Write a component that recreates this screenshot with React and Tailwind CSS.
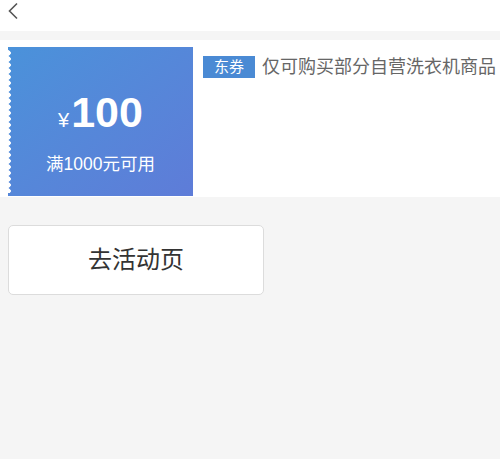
import React from 'react';

export default function App() {
  return (
    <div className="min-h-[459px] w-[500px] bg-[#f5f5f5] font-['Liberation_Sans','Noto_Sans_CJK_SC',sans-serif]">
      {/* HEADER */}
      <div className="h-[31px] bg-white flex items-start px-[7px] pt-[2px]">
        <svg width="12" height="18" viewBox="0 0 12 18">
          <path d="M10 1.5 L2.5 9 L10 16.5" fill="none" stroke="#555" strokeWidth="1.6" />
        </svg>
      </div>

      {/* COUPON */}
      <div className="mt-[9px] bg-white pt-[7px] pb-px pl-[8px] flex">
        <div className="relative shrink-0 w-[185px] h-[149px] bg-gradient-to-br from-[#4a92da] to-[#5e7cd8] flex flex-col items-center text-white">
          <div className="absolute left-[-3px] top-[3px] bottom-[3px] w-[6px] bg-[radial-gradient(circle_at_3px_3px,#fff_2.5px,transparent_3px)] bg-[length:6px_6px]"></div>
          <div className="flex items-baseline mt-[44px]">
            <span className="text-[20px] leading-none mr-[2px]">¥</span>
            <span className="text-[43px] leading-none font-bold font-['Liberation_Sans',sans-serif]">100</span>
          </div>
          <div className="mt-[22px] text-[17.5px] leading-none whitespace-nowrap">满1000元可用</div>
        </div>
        <div className="flex items-start pt-[9px] pl-[10px] whitespace-nowrap">
          <span className="bg-[#4a8ad4] text-white text-[15px] leading-[22px] px-[11px]">东券</span>
          <span className="ml-[7px] text-[#666] text-[18px] leading-[22px]">仅可购买部分自营洗衣机商品</span>
        </div>
      </div>

      {/* ACTION */}
      <div className="px-[8px] pt-[28px]">
        <button className="w-[256px] h-[70px] bg-white border border-[#dcdcdc] rounded-[5px] text-[24px] text-[#333]">
          去活动页
        </button>
      </div>
    </div>
  );
}
